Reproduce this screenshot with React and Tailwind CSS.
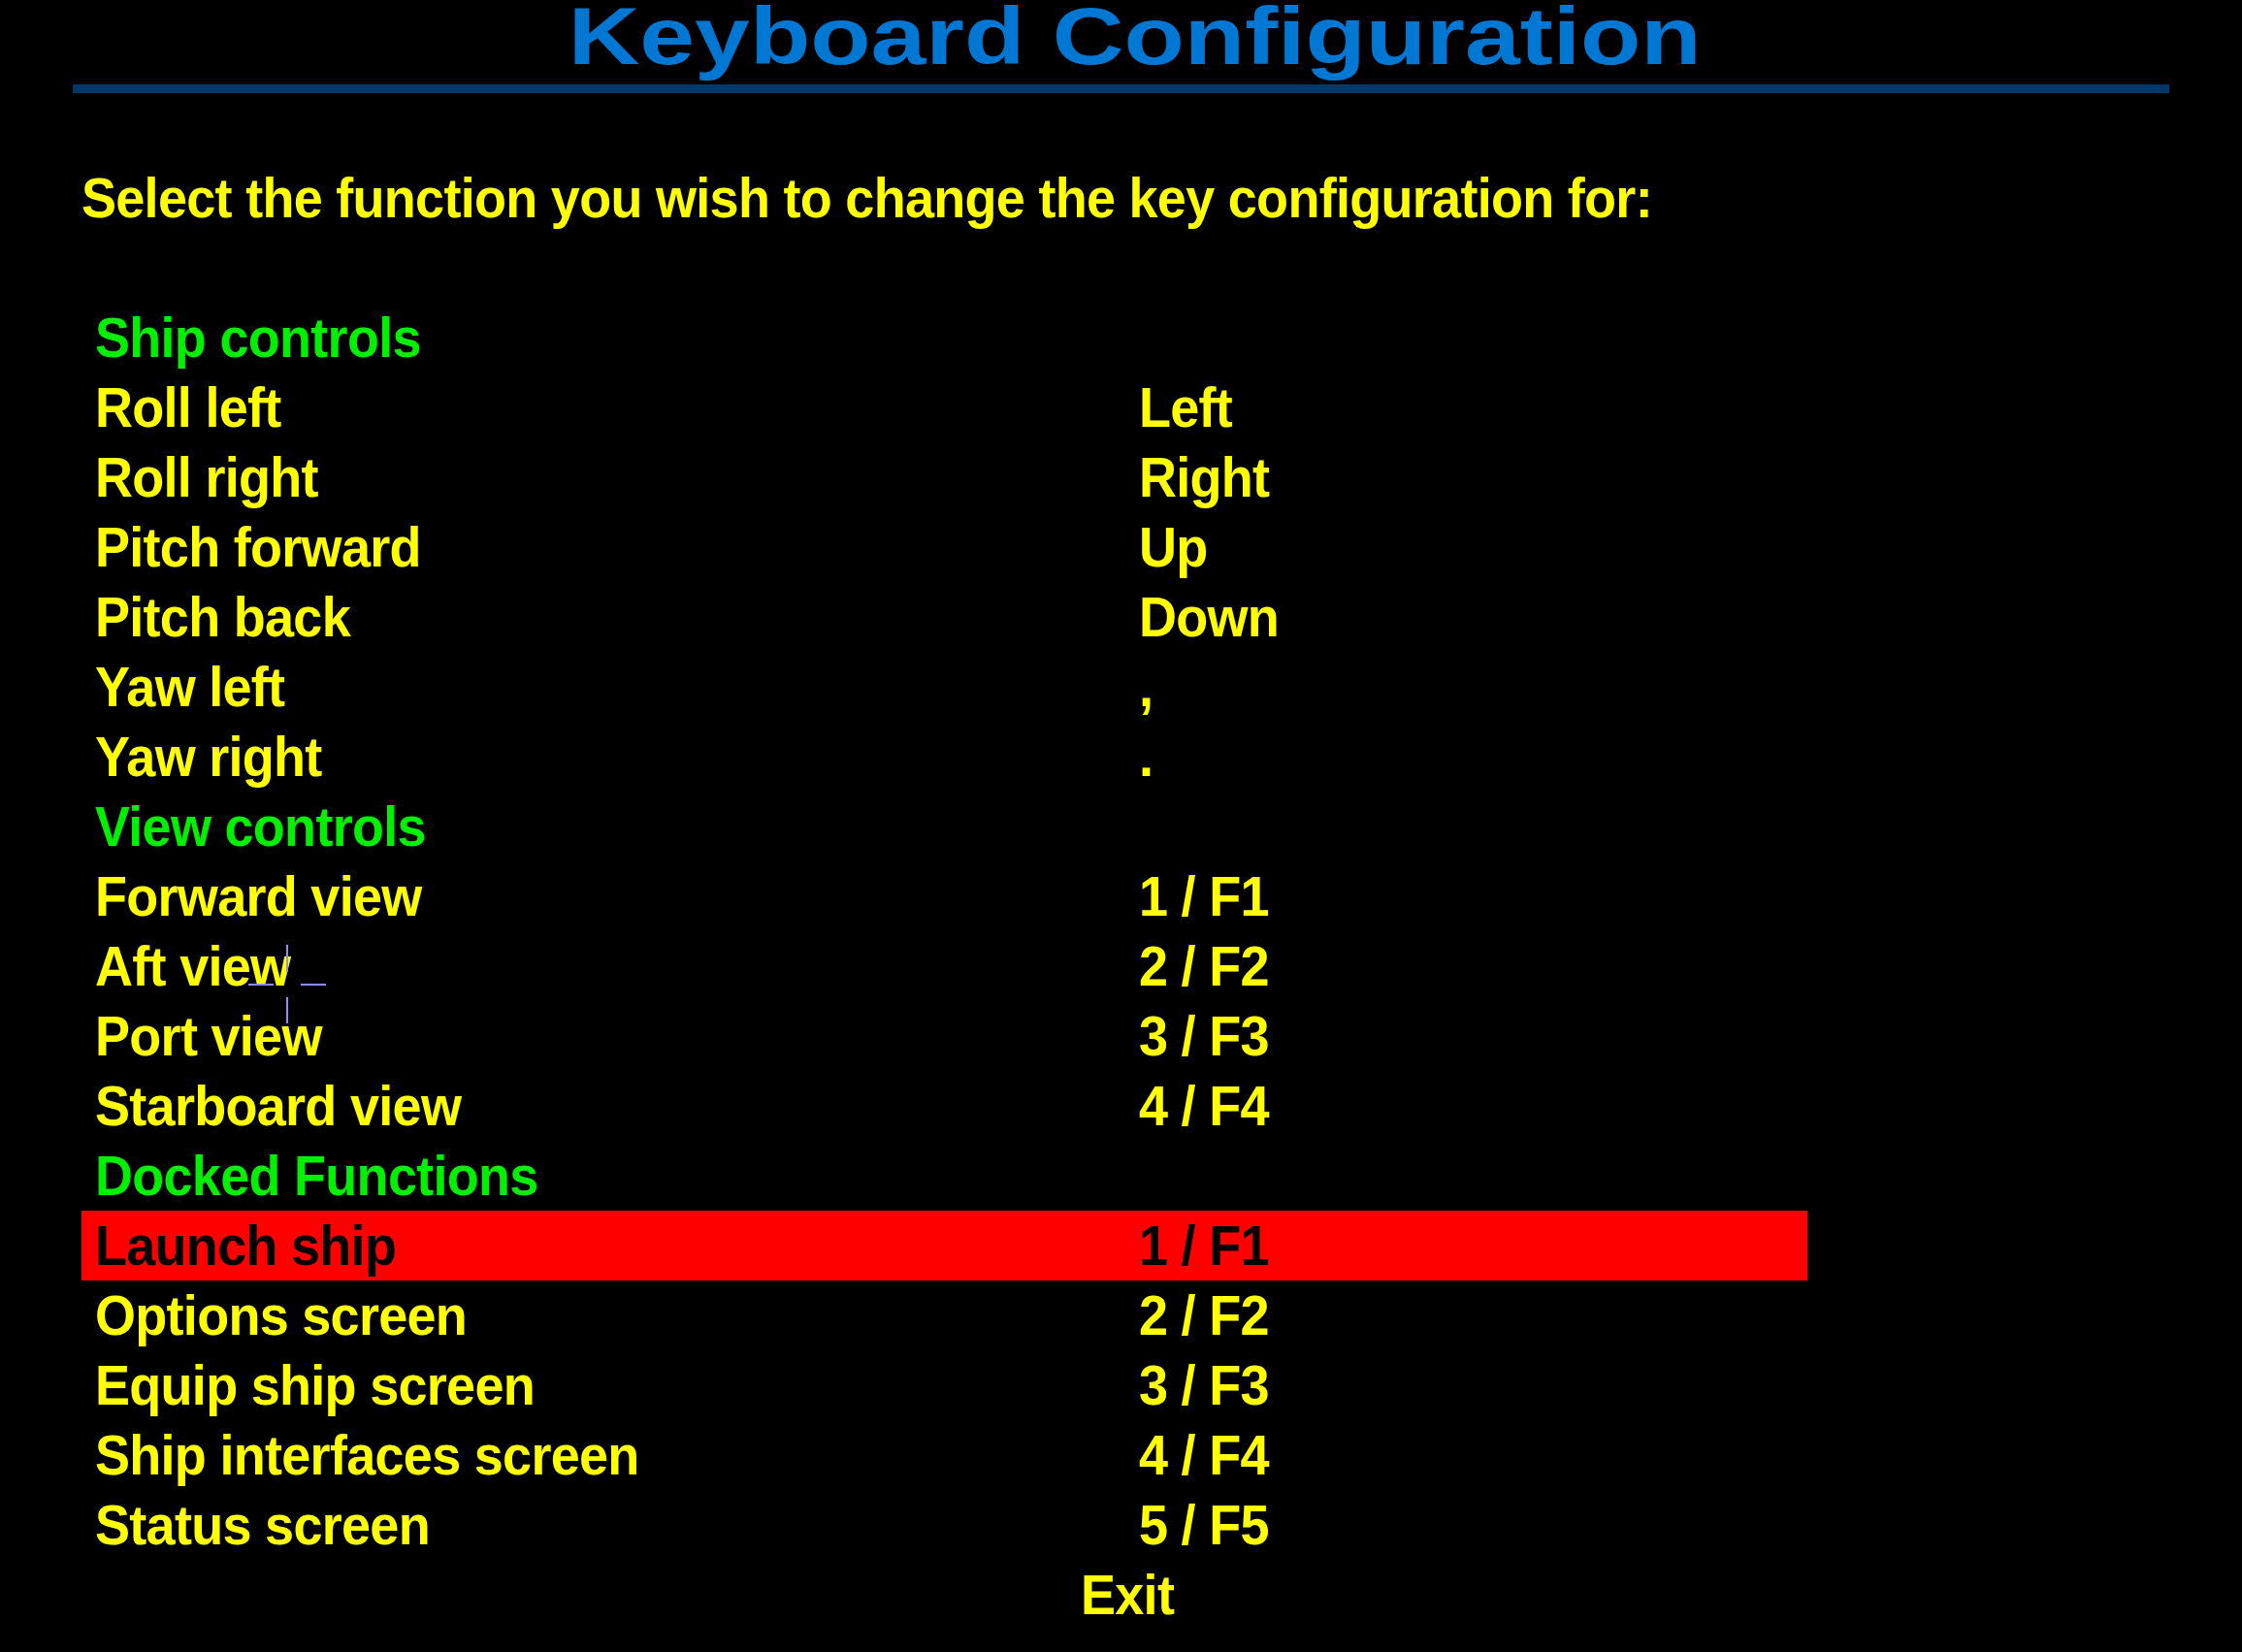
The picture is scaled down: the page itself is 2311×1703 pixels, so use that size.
import React from "react";

const rows = [
  { label: "Ship controls", kind: "head" },
  { label: "Roll left", keyName: "Left" },
  { label: "Roll right", keyName: "Right" },
  { label: "Pitch forward", keyName: "Up" },
  { label: "Pitch back", keyName: "Down" },
  { label: "Yaw left", keyName: "," },
  { label: "Yaw right", keyName: "." },
  { label: "View controls", kind: "head" },
  { label: "Forward view", keyName: "1 / F1" },
  { label: "Aft view", keyName: "2 / F2" },
  { label: "Port view", keyName: "3 / F3" },
  { label: "Starboard view", keyName: "4 / F4" },
  { label: "Docked Functions", kind: "head" },
  { label: "Launch ship", keyName: "1 / F1", selected: true },
  { label: "Options screen", keyName: "2 / F2" },
  { label: "Equip ship screen", keyName: "3 / F3" },
  { label: "Ship interfaces screen", keyName: "4 / F4" },
  { label: "Status screen", keyName: "5 / F5" },
];

// game font is a touch narrower than Arial bold
const txt = "block origin-left scale-x-[0.947] whitespace-nowrap leading-[72px]";

const Row = ({ label, keyName, kind, selected }) => {
  if (kind === "head") {
    return (
      <div className="flex h-[72px] pl-[14px] text-[#00f000]">
        <span className={txt}>{label}</span>
      </div>
    );
  }
  return (
    <div className={`flex h-[72px] pl-[14px] ${selected ? "bg-[#ff0000] text-black" : "text-[#ffff00]"}`}>
      <div className="flex w-[1076px] shrink-0">
        <span className={txt}>{label}</span>
      </div>
      <span className={txt}>{keyName}</span>
    </div>
  );
};

export default function App() {
  return (
    <div
      className="relative min-h-[1703px] w-full overflow-hidden bg-black font-bold text-[57px] tracking-[-0.74px]"
      style={{ fontFamily: '"Liberation Sans", Arial, sans-serif' }}
    >
      {/* Header */}
      <div className="flex justify-center pl-[28px]">
        <h1 className="h-[74px] origin-center scale-x-[1.215] text-[84px] leading-[74px] tracking-normal text-[#0077d2]">
          Keyboard Configuration
        </h1>
      </div>
      <div className="ml-[75px] mt-[13px] h-[9px] w-[2161px] bg-[#00386a]" />

      <div className="ml-[84px] mt-[78px] flex h-[60px] text-[#ffff00]">
        <span className="block origin-left scale-x-[0.947] whitespace-nowrap leading-[60px]">
          Select the function you wish to change the key configuration for:
        </span>
      </div>

      {/* Function list */}
      <div className="ml-[84px] mt-[78px] w-[1779px]">
        {rows.map((r) => (
          <Row key={r.label} {...r} />
        ))}
      </div>
      <div className="flex h-[72px] pl-[1114px] text-[#ffff00]">
        <span className={txt}>Exit</span>
      </div>

      {/* Mouse crosshair */}
      <svg className="absolute left-[254px] top-[972px]" width="84" height="86" viewBox="0 0 84 86">
        <g stroke="#8c8cff" strokeWidth="2">
          <line x1="42" y1="2" x2="42" y2="30" />
          <line x1="42" y1="56" x2="42" y2="83" />
          <line x1="2" y1="43" x2="28" y2="43" />
          <line x1="56" y1="43" x2="82" y2="43" />
        </g>
      </svg>
    </div>
  );
}
